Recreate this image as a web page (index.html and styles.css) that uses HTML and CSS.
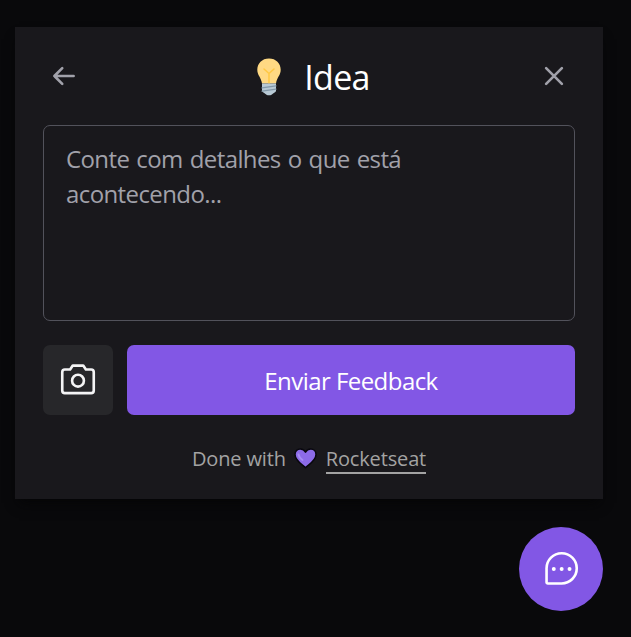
FILE: index.html
```html
<!DOCTYPE html>
<html lang="pt-BR">
<head>
<meta charset="utf-8">
<title>Feedback</title>
<link rel="stylesheet" href="styles.css">
</head>
<body>
<main class="widget">
  <section class="panel">
    <header class="header">
      <button class="icon-button" type="button" aria-label="Voltar">
        <svg class="icon-small" viewBox="0 0 256 256"><path d="M216 128H40M112 56 40 128l72 72"/></svg>
      </button>
      <h1 class="title">
        <svg class="bulb" viewBox="0 0 26 40">
          <path fill="#ffd983" d="M13 1.500C6 1.500 1.300 6.400 1.300 12.800c0 5.600 3.700 7.400 4.700 13.700h14c1-6.300 4.700-8.100 4.700-13.700C24.700 6.400 20 1.500 13 1.500Z"/>
          <path fill="none" stroke="#ffc843" stroke-width="1.500" stroke-linecap="round" stroke-linejoin="round" d="m8 12 5 4.500 5-4.500M13 16.500V26"/>
          <path fill="#b8c9d5" d="M6 26.500h14V34c0 1-2.500 2-3.500 3S15 38.300 13 38.300 10.500 38 9.500 37 6 35 6 34Z"/>
          <path fill="none" stroke="#8298a8" stroke-width="1.200" stroke-linecap="round" d="m6 30.800 14-2M6 34.200l14-2"/>
        </svg>
        <span class="title-text">Idea</span>
      </h1>
      <button class="icon-button" type="button" aria-label="Fechar">
        <svg class="icon-small" viewBox="0 0 256 256"><path d="M200 56 56 200M200 200 56 56"/></svg>
      </button>
    </header>
    <form class="form">
      <textarea class="comment" placeholder="Conte com detalhes o que está acontecendo..."></textarea>
      <div class="actions">
        <button class="camera" type="button" aria-label="Capturar tela">
          <svg class="icon" viewBox="0 0 256 256"><path d="M208 208H48a16 16 0 0 1-16-16V80a16 16 0 0 1 16-16h32l16-24h64l16 24h32a16 16 0 0 1 16 16v112a16 16 0 0 1-16 16Z"/><circle cx="128" cy="132" r="36"/></svg>
        </button>
        <button class="submit" type="button"><span>Enviar Feedback</span></button>
      </div>
    </form>
    <footer class="footer">
      <span class="credit">Done with</span>
      <svg class="heart" viewBox="0 0 23 21"><path fill="#8c6be8" stroke="#08070d" stroke-width="1.500" stroke-linejoin="round" d="M11.500 19.800C8 16.300 1 12.500 1 6.500 1 3.200 3.300 1 6.300 1c2.300 0 4.200 1.200 5.200 3.200C12.500 2.200 14.400 1 16.700 1 19.700 1 22 3.200 22 6.500c0 6-7 9.800-10.500 13.300Z"/><path fill="none" stroke="#a58bf2" stroke-width="2" stroke-linecap="round" d="M4.500 6.500q.5 3 4 5.500"/></svg>
      <a class="link" href="#">Rocketseat</a>
    </footer>
  </section>
  <button class="launcher" type="button" aria-label="Feedback">
    <svg class="icon" viewBox="0 0 256 256"><path d="M132 216H47.700a7.600 7.600 0 0 1-7.700-7.700V124a92 92 0 0 1 184 0 92 92 0 0 1-92 92Z"/><g class="dots"><circle cx="84" cy="128" r="12"/><circle cx="132" cy="128" r="12"/><circle cx="180" cy="128" r="12"/></g></svg>
  </button>
</main>
</body>
</html>
```

FILE: styles.css
```css
* { box-sizing: border-box; }
body {
  margin: 0;
  height: 637px;
  overflow: hidden;
  background: #09090b;
  font-family: "Open Sans", "Noto Sans", sans-serif;
}
button { border: 0; padding: 0; font: inherit; color: inherit; }
.widget {
  display: flex;
  flex-direction: column;
  align-items: flex-end;
  gap: 28px;
  padding: 27px 28px 0 15px;
}
.panel {
  width: 588px;
  height: 472px;
  padding: 28px;
  background: #19181c;
  box-shadow: 0 8px 12px -4px #050506;
}
.header {
  display: flex;
  justify-content: space-between;
  height: 49px;
  padding: 7px 7px 0;
}
.icon-button { width: 28px; height: 28px; background: none; color: #a1a1aa; }
.icon-small, .icon {
  display: block;
  fill: none;
  stroke: currentColor;
  stroke-linecap: round;
  stroke-linejoin: round;
}
.icon-small { width: 28px; height: 28px; stroke-width: 24; }
.icon { width: 42px; height: 42px; stroke-width: 16; }
.title {
  display: flex;
  align-items: center;
  gap: 22px;
  height: 49px;
  margin: -10px 0 0;
  padding-left: 8px;
  color: #fff;
  font-size: 34px;
  font-weight: 400;
  line-height: 49px;
}
.bulb { width: 26px; height: 40px; }
.title-text { letter-spacing: -0.7px; padding-top: 1px; }
.form { margin-top: 21px; }
.comment {
  display: block;
  width: 532px;
  height: 196px;
  padding: 15px 22px;
  border: 1px solid #52525b;
  border-radius: 7px;
  outline: 0;
  background: transparent;
  resize: none;
  overflow: hidden;
  font: 24px/35px "Open Sans", "Noto Sans", sans-serif;
  letter-spacing: -0.6px;
  word-spacing: 1.4px;
}
.comment::placeholder { color: #a1a1aa; opacity: 1; }
.actions { display: flex; gap: 14px; margin-top: 24px; }
.camera {
  display: grid;
  place-items: center;
  width: 70px;
  height: 70px;
  border-radius: 7px;
  background: #27272a;
  color: #f4f4f5;
}
.submit {
  flex: 1;
  height: 70px;
  border-radius: 7px;
  background: #8257e5;
  color: #fff;
  font-size: 24px;
  letter-spacing: -0.55px;
}
.footer {
  display: flex;
  justify-content: center;
  align-items: flex-start;
  margin-top: 30px;
  color: #a3a3a3;
  font-size: 20px;
  line-height: 28px;
  letter-spacing: -0.15px;
}
.heart { width: 23px; height: 21px; margin: 3px 9px 0 8px; }
.link {
  height: 29px;
  border-bottom: 2px solid #a3a3a3;
  color: inherit;
  text-decoration: none;
}
.launcher {
  display: grid;
  place-items: center;
  width: 84px;
  height: 84px;
  border-radius: 50%;
  background: #8257e5;
  color: #fff;
}
.dots { fill: currentColor; stroke: none; }
```
